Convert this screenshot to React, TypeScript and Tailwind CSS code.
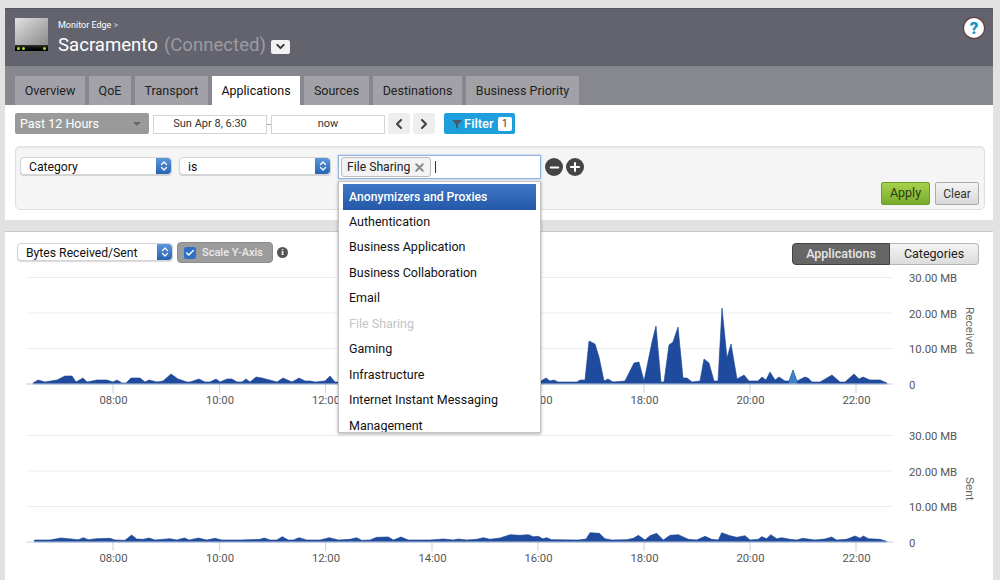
import { Check, ChevronDown, ChevronLeft, ChevronRight, ChevronsUpDown, Minus, Plus, X } from "lucide-react";

const font = "font-['Roboto','Liberation_Sans',sans-serif]";

const tabs = [
  { name: "Overview", w: "w-[70px]" },
  { name: "QoE", w: "w-[42px]" },
  { name: "Transport", w: "w-[73px]" },
  { name: "Applications", w: "w-[88px]", active: true },
  { name: "Sources", w: "w-[65px]" },
  { name: "Destinations", w: "w-[89px]" },
  { name: "Business Priority", w: "w-[113px]" },
];

const options = [
  "Anonymizers and Proxies",
  "Authentication",
  "Business Application",
  "Business Collaboration",
  "Email",
  "File Sharing",
  "Gaming",
  "Infrastructure",
  "Internet Instant Messaging",
  "Management",
];

const hours = [
  { label: "08:00", x: 113 },
  { label: "10:00", x: 219.5 },
  { label: "12:00", x: 325.5 },
  { label: "14:00", x: 432 },
  { label: "16:00", x: 538 },
  { label: "18:00", x: 644 },
  { label: "20:00", x: 750 },
  { label: "22:00", x: 856 },
];

// page coordinates, traced from the picture
const received: number[][] = [
  [33, 383], [38, 380], [45, 382], [57, 380], [65, 376], [72, 376], [76, 382], [83, 378], [87, 382], [97, 380],
  [107, 380], [113, 382], [117, 380], [122, 383], [126, 383], [131, 378], [140, 378], [145, 382], [149, 380], [157, 382],
  [163, 381], [171, 374], [178, 379], [187, 382], [190, 382], [199, 379], [205, 382], [210, 382], [216, 379], [220, 382],
  [227, 379], [232, 379], [237, 382], [242, 382], [246, 379], [250, 382], [256, 377], [262, 378], [277, 382], [283, 378],
  [292, 382], [299, 378], [305, 381], [310, 381], [315, 382], [325, 381], [330, 376], [335, 382], [541, 381], [546, 378],
  [550, 381], [554, 380], [558, 382], [577, 382], [580, 380], [585, 380], [589, 341], [595, 344], [599, 357], [604, 381],
  [608, 379], [613, 382], [625, 381], [634, 363], [639, 362], [644, 381], [652, 342], [656, 326], [661, 382], [664, 382],
  [669, 345], [673, 342], [678, 327], [683, 378], [687, 378], [692, 382], [700, 381], [704, 359], [709, 363], [714, 381],
  [718, 381], [722, 308], [727, 358], [731, 344], [737, 379], [744, 375], [749, 381], [758, 381], [762, 377], [766, 380],
  [770, 372], [775, 380], [779, 377], [785, 381], [789, 381], [793, 370], [797, 381], [805, 377], [808, 378], [812, 382],
  [820, 382], [832, 375], [840, 382], [845, 382], [854, 374], [859, 379], [863, 377], [870, 380], [880, 380], [887, 383],
];

const sentLeft = [
  [103, 120], [150, 120], [183, 114], [235, 119], [250, 113], [265, 119], [290, 116], [330, 115], [345, 120], [375, 121],
  [395, 105], [410, 117], [430, 118], [447, 114], [465, 120], [510, 116], [530, 120], [553, 114], [568, 120], [595, 114],
  [620, 120], [645, 115], [665, 120], [720, 120], [780, 118], [793, 114], [810, 120], [830, 120], [847, 110], [865, 120],
  [880, 120], [897, 113], [920, 120], [960, 120], [988, 113], [1015, 120], [1050, 118], [1070, 113], [1085, 121], [1110, 120],
  [1130, 112], [1165, 111], [1180, 120], [1203, 111], [1225, 120], [1290, 120], [1330, 117], [1360, 120], [1375, 117], [1400, 120],
  [1430, 118], [1450, 113], [1470, 118],
];

const sentRight = [
  [0, 114], [30, 104], [60, 106], [85, 104], [100, 110], [115, 109], [128, 116], [140, 113], [155, 119], [235, 120],
  [258, 117], [270, 98], [298, 100], [315, 116], [335, 120], [380, 119], [400, 115], [415, 106], [435, 120], [450, 107],
  [470, 100], [490, 120], [510, 106], [535, 104], [565, 118], [590, 120], [615, 109], [635, 118], [655, 120], [665, 98],
  [690, 107], [710, 112], [735, 107], [750, 120], [775, 118], [785, 110], [800, 116], [812, 104], [830, 116], [845, 113],
  [870, 118], [890, 120], [908, 115], [945, 120], [975, 117], [995, 111], [1010, 120], [1040, 118], [1065, 108], [1080, 115],
  [1090, 108], [1105, 116], [1140, 118], [1160, 124],
];

const sent = [
  ...sentLeft.map(([x, y]) => [x / 3, 500 + y / 3]),
  ...sentRight.map(([x, y]) => [500 + x / 3, 500 + y / 3]),
];

const toLine = (pts: number[][]) => pts.map(([x, y]) => `${x},${y}`).join(" ");

const Chart = ({
  data,
  top,
  height,
  base,
  label,
  labelY,
  covered = [],
  highlight,
}: {
  data: number[][];
  top: number;
  height: number;
  base: number;
  label: string;
  labelY: number;
  covered?: string[];
  highlight?: string;
}) => {
  const first = data[0][0];
  const last = data[data.length - 1][0];
  return (
    <svg viewBox={`5 ${top} 988 ${height}`} className="block w-[988px]" style={{ height }}>
      {[base - 106.5, base - 71, base - 35.5].map((y) => (
        <line key={y} x1="26" x2="893" y1={y} y2={y} stroke="#eeeeee" strokeWidth="1" />
      ))}
      {hours
        .filter((h) => !covered.includes(h.label))
        .map((h) => (
          <g key={h.label}>
            <line x1={h.x} x2={h.x} y1={base} y2={base + 9} stroke="#c3d2e4" strokeWidth="1" />
            <text x={h.x + 0.5} y={base + 19.5} textAnchor="middle" fontSize="11.3" fill="#555555" fontFamily="Roboto, sans-serif">
              {h.label}
            </text>
          </g>
        ))}
      <polygon points={`${first},${base} ${toLine(data)} ${last},${base}`} fill="#1f4b9f" stroke="#1a418f" strokeWidth="0.6" />
      {highlight && <polygon points={highlight} fill="#3f7fc4" />}
      <line x1="26" x2="893" y1={base} y2={base} stroke="#c4cfdf" strokeWidth="1" />
      {["30.00 MB", "20.00 MB", "10.00 MB", "0"].map((t, i) => (
        <text key={t} x="909" y={base - 106.5 + i * 35.5 + 4.5} fontSize="11.3" fill="#555555" fontFamily="Roboto, sans-serif">
          {t}
        </text>
      ))}
      <text
        transform={`translate(966 ${labelY}) rotate(90)`}
        fontSize="11.8"
        fill="#666666"
        fontFamily="Roboto, sans-serif"
      >
        {label}
      </text>
    </svg>
  );
};

const Select = ({ value, className }: { value: string; className: string }) => (
  <div className={`flex h-[18px] rounded-[4px] border border-[#d4d4d4] bg-white shadow-[0_1px_1px_rgba(0,0,0,0.15)] ${className}`}>
    <span className="flex-1 pl-2 pt-px text-[12.2px] leading-[17px] text-[#111111]">{value}</span>
    <span className="flex w-[15px] items-center justify-center rounded-r-[4px] bg-gradient-to-b from-[#5c97db] to-[#2563b4]">
      <ChevronsUpDown size={12} strokeWidth={2.5} className="text-white" />
    </span>
  </div>
);

const App = () => {
  return (
    <div className={`relative h-[580px] w-[1000px] overflow-hidden bg-[#e2e2e2] pt-[8px] ${font}`}>
      <div className="ml-[5px] w-[988px]">
        {/* device header */}
        <div className="flex h-[57px] items-start border-t border-[#55555e] bg-[#63636d] pl-[10px] pr-[9px]">
          <div className="mt-[9px] w-[33px]">
            <div className="h-[27px] bg-gradient-to-br from-[#e2e2e2] to-[#8a8a8a]" />
            <div className="flex h-[6px] items-center justify-between bg-gradient-to-b from-[#333333] to-[#000000] px-[2px]">
              <span className="flex gap-[2px]">
                <span className="h-[3px] w-[3px] rounded-full bg-[#9be12c]" />
                <span className="h-[3px] w-[3px] rounded-full bg-[#9be12c]" />
              </span>
              <span className="h-[3px] w-[3px] rounded-full bg-[#9be12c]" />
            </div>
          </div>
          <div className="ml-[10px] mt-[10px]">
            <div className="text-[9px] leading-[12px] text-white">
              Monitor Edge <span className="text-[#c5c5ca]">&gt;</span>
            </div>
            <div className="mt-[2px] flex items-center text-[18.6px] leading-[24px] text-white">
              <span>Sacramento</span>
              <span className="ml-[6px] text-[#9b9ba2]">(Connected)</span>
              <span className="ml-[5px] mt-[3px] flex h-[14px] w-[19px] items-center justify-center rounded-[2px] bg-[#f2f2f2]">
                <ChevronDown size={13} strokeWidth={3.5} className="text-[#333333]" />
              </span>
            </div>
          </div>
          <div className="ml-auto mt-[9px] flex h-[20px] w-[20px] items-center justify-center rounded-full bg-white text-[17px] font-black leading-none text-[#1496c9] shadow-[0_0_1px_1px_rgba(90,30,30,0.6)]">
            ?
          </div>
        </div>

        {/* tabs */}
        <div className="flex h-[40px] items-end gap-[4px] border-t border-[#5c5c64] bg-[#878790] pl-[10px]">
          {tabs.map((t) => (
            <div
              key={t.name}
              className={`flex h-[29px] items-center justify-center pt-px text-[12.5px] ${t.w} ${
                t.active ? "bg-white text-[#111111]" : "bg-[#a1a1a7] text-[#222222]"
              }`}
            >
              {t.name}
            </div>
          ))}
        </div>

        {/* filter panel */}
        <div className="h-[115px] bg-white px-[10px] pt-[8px]">
          <div className="flex h-[21px] items-center">
            <div className="flex h-[21px] w-[134px] items-center justify-between rounded-[2px] bg-[#9a9a9a] pl-[5px] pr-[8px] pt-px text-[12.5px] text-white">
              Past 12 Hours
              <span className="h-0 w-0 border-x-[4px] border-t-[4px] border-x-transparent border-t-[#666666]" />
            </div>
            <div className="ml-[4px] mt-px flex h-[19px] w-[114px] items-center justify-center border border-[#d4d4d4] pt-px text-[11px] text-[#333333]">
              Sun Apr 8, 6:30
            </div>
            <div className="mt-px h-px w-[4px] bg-[#aaaaaa]" />
            <div className="mt-px flex h-[19px] w-[114px] items-center justify-center border border-[#d4d4d4] pt-px text-[11px] text-[#333333]">
              now
            </div>
            <div className="ml-[3px] flex h-[21px] w-[22px] items-center justify-center rounded-[2px] bg-[#eeeeee]">
              <ChevronLeft size={16} strokeWidth={3.2} className="text-[#444444]" />
            </div>
            <div className="ml-[3px] flex h-[21px] w-[22px] items-center justify-center rounded-[2px] bg-[#eeeeee]">
              <ChevronRight size={16} strokeWidth={3.2} className="text-[#444444]" />
            </div>
            <div className="ml-[9px] flex h-[21px] w-[71px] items-center rounded-[2px] bg-[#1d9fdd] pl-[8px] text-[13px] font-medium text-white">
              <svg width="10" height="10" viewBox="0 0 10 10" className="mr-[2px] mt-px">
                <path d="M0 1h10L6 5.5V10L4 8.5V5.5z" fill="#4a5a68" />
              </svg>
              Filter
              <span className="ml-[4px] flex h-[14px] w-[14px] items-center justify-center rounded-[2px] bg-white text-[10px] font-normal text-[#333333]">
                1
              </span>
            </div>
          </div>

          <div className="mt-[12px] h-[64px] w-[970px] rounded-[5px] border border-[#e0e0e0] bg-[#f5f5f5] shadow-[inset_0_1px_2px_rgba(0,0,0,0.06)]">
            <div className="flex items-start pl-[4px] pt-[8px]">
              <Select value="Category" className="mt-[2px] w-[152px]" />
              <Select value="is" className="ml-[7px] mt-[2px] w-[152px]" />
              <div className="ml-[7px] flex h-[24px] w-[203px] items-center border border-[#8fb3df] bg-white pl-[2px] shadow-[0_0_2px_rgba(70,130,210,0.5)]">
                <div className="flex h-[20px] w-[90px] items-center justify-between rounded-[3px] border border-[#bbbbbb] bg-[#f3f3f3] pl-[5px] pr-[4px] text-[12.2px] text-[#222222]">
                  File Sharing
                  <X size={13} strokeWidth={3.5} className="text-[#888888]" />
                </div>
                <div className="ml-[4px] h-[12px] w-px bg-[#333333]" />
              </div>
              <div className="ml-[4px] mt-[3px] flex h-[18px] w-[18px] items-center justify-center rounded-full bg-[#444444]">
                <Minus size={13} strokeWidth={3.5} className="text-white" />
              </div>
              <div className="ml-[3px] mt-[3px] flex h-[18px] w-[18px] items-center justify-center rounded-full bg-[#444444]">
                <Plus size={14} strokeWidth={3.5} className="text-white" />
              </div>
            </div>
            <div className="mr-[5px] mt-[3px] flex justify-end gap-[5px]">
              <div className="flex h-[23px] w-[49px] items-center justify-center rounded-[2px] border border-[#6f9a2a] bg-gradient-to-b from-[#a6d14d] to-[#79ac2c] text-[12.5px] text-[#2b3a12]">
                Apply
              </div>
              <div className="flex h-[23px] w-[44px] items-center justify-center rounded-[2px] border border-[#aaaaaa] bg-gradient-to-b from-[#f4f4f4] to-[#d8d8d8] text-[12px] text-[#333333]">
                Clear
              </div>
            </div>
          </div>
        </div>

        {/* chart panel */}
        <div className="mt-[11px] h-[349px] border-t border-[#c9c9c9] bg-white">
          <div className="flex h-[38px] items-start pl-[12px] pr-[14px] pt-[10px]">
            <Select value="Bytes Received/Sent" className="mt-[1px] w-[156px]" />
            <div className="ml-[4px] flex h-[21px] w-[96px] items-center rounded-[4px] border border-[#8c8c8c] bg-[#9c9c9c] pl-[6px] pt-px text-[11px] font-medium text-[#e9e9e9]">
              <span className="flex h-[12px] w-[12px] items-center justify-center rounded-[2px] bg-[#2f6fc4]">
                <Check size={10} strokeWidth={3.5} className="text-white" />
              </span>
              <span className="ml-[6px]">Scale Y-Axis</span>
            </div>
            <span className="ml-[4px] mt-[5px] flex h-[11px] w-[11px] items-center justify-center rounded-full bg-[#555555] font-['Liberation_Serif',serif] text-[9px] font-bold text-white">
              i
            </span>
            <div className="ml-auto flex h-[23px] pt-px text-[12.5px]">
              <div className="flex w-[98px] items-center justify-center rounded-l-[4px] border border-[#444444] bg-[#666666] font-medium text-[#e8e8e8]">
                Applications
              </div>
              <div className="flex w-[89px] items-center justify-center rounded-r-[4px] border border-l-0 border-[#b5b5b5] bg-gradient-to-b from-[#f4f4f4] to-[#dcdcdc] text-[#222222]">
                Categories
              </div>
            </div>
          </div>
          <Chart
            data={received}
            top={270}
            height={150}
            base={384}
            label="Received"
            labelY={307}
            covered={["14:00"]}
            highlight="789,381 793,370 797,381 797,384 789,384"
          />
          <Chart data={sent} top={420} height={160} base={542} label="Sent" labelY={477} />
        </div>
      </div>

      {/* category dropdown */}
      <div className="absolute left-[338px] top-[181px] h-[252px] w-[203px] overflow-hidden border border-[#c4c4c4] bg-white px-[4px] pt-[2px] text-[12.5px] text-[#111111] shadow-[0_1px_3px_rgba(0,0,0,0.35)]">
        {options.map((o, i) => (
          <div
            key={o}
            className={`flex h-[25.5px] items-center pl-[6px] ${
              i === 0
                ? "h-[24px] bg-gradient-to-b from-[#3f78c6] to-[#2457a8] text-[12.2px] font-medium text-white"
                : i === 5
                  ? "text-[#c4c4c4]"
                  : ""
            }`}
          >
            {o}
          </div>
        ))}
      </div>
    </div>
  );
};

export default App;
